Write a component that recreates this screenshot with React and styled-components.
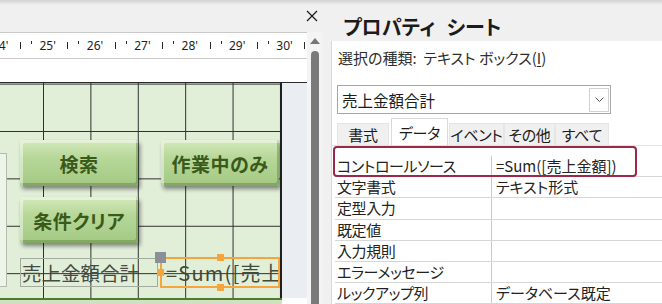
import React from "react";
import styled, { createGlobalStyle } from "styled-components";

const GlobalStyle = createGlobalStyle`
  html, body { margin: 0; padding: 0; background: #f0f0f0; }
  body { font-family: "Noto Sans CJK JP", "Noto Sans", sans-serif; }
`;

const Page = styled.div`
  position: relative;
  display: flex;
  width: 662px;
  height: 304px;
  overflow: hidden;
  background: #f0f0f0;

  &::before {
    content: "";
    position: absolute;
    left: 0;
    right: 0;
    top: 0;
    height: 5px;
    background: linear-gradient(#d2d2d2, rgba(240, 240, 240, 0));
    z-index: 5;
  }
`;

/* ---------- left: form designer ---------- */

const LeftPane = styled.div`
  width: 323px;
  display: flex;
  flex-direction: column;
`;

const TopBar = styled.div`
  height: 32px;
  display: flex;
  justify-content: flex-end;
  align-items: center;
  padding-right: 5px;
`;

const Body = styled.div`
  flex: 1;
  display: flex;
  min-height: 0;
`;

const Designer = styled.div`
  width: 307px;
  display: flex;
  flex-direction: column;
  background: #ffffff;
`;

const Ruler = styled.div`
  height: 25px;
  border-top: 1px solid #cacaca;
  border-bottom: 1px solid #cacaca;
  display: flex;
  align-items: center;
  overflow: hidden;
`;

const RulerTrack = styled.div`
  display: flex;
  margin-left: -8px;
`;

const RulerSeg = styled.div`
  flex: 0 0 47.4px;
  display: flex;
  align-items: flex-start;
  height: 12px;
`;

const RulerNum = styled.span`
  flex: 0 0 28px;
  font-family: "Noto Sans", sans-serif;
  font-size: 12px;
  line-height: 12px;
  color: #1e1e1e;
`;

const LongTick = styled.span`
  width: 1px;
  height: 7px;
  margin-top: 2px;
  background: #2a2a2a;
`;

const ShortTick = styled.span`
  width: 1px;
  height: 3px;
  margin-top: 1px;
  margin-left: 10px;
  background: #2a2a2a;
`;

const RulerGap = styled.div`
  height: 23px;
  background: #ffffff;
`;

const CanvasRow = styled.div`
  flex: 1;
  display: flex;
  border-top: 1px solid #2b2b2b;
`;

const Canvas = styled.div`
  position: relative;
  width: 280px;
  border-right: 2px solid #1f1f1f;
  overflow: hidden;
  background-color: #e1eed8;
  background-image:
    linear-gradient(to right, #2e2e2e 1px, transparent 1px),
    linear-gradient(to bottom, #2e2e2e 1px, transparent 1px);
  background-size: 47.4px 47.4px;
  background-position: -4.4px 0.6px;
`;

const CanvasMargin = styled.div`
  flex: 1;
  background: #eaeef2;
`;

const CanvasFooter = styled.div`
  height: 4px;
  border-top: 2px solid #4d7c2e;
  background: #cfe1c1;
  width: 282px;
`;

const Stub = styled.div`
  position: absolute;
  left: -1px;
  top: 70px;
  width: 6px;
  height: 132px;
  border: 1px solid #b3bcaf;
  background: #edf5e8;
`;

const FormButton = styled.div`
  position: absolute;
  left: ${(p) => p.$x}px;
  top: ${(p) => p.$y}px;
  width: 118px;
  height: 46px;
  box-sizing: border-box;
  display: flex;
  align-items: center;
  justify-content: center;
  border-radius: 2px;
  background: linear-gradient(#d3e9ba 0%, #b6d798 40%, #a3c983 100%);
  box-shadow:
    inset 3px 3px 0 rgba(255, 255, 255, 0.45),
    inset -2px -3px 0 rgba(70, 105, 40, 0.35),
    2px 3px 4px rgba(0, 0, 0, 0.45);
  color: #3a5a1b;
  font-size: 19px;
  font-weight: 700;
  font-feature-settings: "palt";
  letter-spacing: 0.5px;
`;

const FieldLabel = styled.div`
  position: absolute;
  left: 20px;
  top: 175px;
  width: 138px;
  height: 29px;
  box-sizing: border-box;
  border: 1px solid #a3ab9f;
  padding-left: 1px;
  display: flex;
  align-items: center;
  font-size: 19.5px;
  color: #454b42;
  white-space: nowrap;
`;

const FieldBox = styled.div`
  position: absolute;
  left: 160px;
  top: 174px;
  width: 120px;
  height: 31px;
  box-sizing: border-box;
  border: 2px solid #f6a43c;
  padding-left: 4px;
  display: flex;
  align-items: center;
  font-size: 20px;
  letter-spacing: 1.2px;
  color: #3f4a3a;
  white-space: nowrap;
  overflow: hidden;
`;

const Handle = styled.span`
  position: absolute;
  left: ${(p) => p.$x}px;
  top: ${(p) => p.$y}px;
  width: 7px;
  height: 7px;
  background: #f6a43c;
`;

const MoveHandle = styled.span`
  position: absolute;
  left: 155px;
  top: 169px;
  width: 11px;
  height: 11px;
  background: #8c9096;
`;

const Scrollbar = styled.div`
  width: 16px;
  display: flex;
  flex-direction: column;
  align-items: center;
  background: #f4f4f4;
  padding-top: 6px;
`;

const UpArrow = styled.span`
  width: 0;
  height: 0;
  border-left: 5px solid transparent;
  border-right: 5px solid transparent;
  border-bottom: 6px solid #767676;
`;

const Thumb = styled.span`
  flex: 1;
  width: 8px;
  margin-top: 7px;
  border-radius: 4px 4px 0 0;
  background: #7a7a7a;
`;

/* ---------- right: property sheet ---------- */

const RightPane = styled.div`
  flex: 1;
  display: flex;
  flex-direction: column;
`;

const Title = styled.div`
  height: 47px;
  display: flex;
  align-items: center;
  padding-left: 20px;
  padding-top: 12px;
  box-sizing: border-box;
  font-size: 20px;
  font-weight: 700;
  font-feature-settings: "palt";
  word-spacing: 7px;
  white-space: pre;
  color: #1b1b1b;
`;

const Sheet = styled.div`
  flex: 1;
  margin-left: 8px;
  border-left: 1px solid #d8d8d8;
  background: #ffffff;
  display: flex;
  flex-direction: column;
`;

const SelType = styled.div`
  height: 28px;
  margin-top: 2px;
  padding-left: 6px;
  display: flex;
  align-items: center;
  font-size: 15px;
  font-feature-settings: "palt";
  color: #2e2e2e;
  white-space: nowrap;

  u { text-decoration: underline; text-underline-offset: 2px; }
`;

const Combo = styled.div`
  margin: 14px 0 0 5px;
  width: 274px;
  height: 29px;
  box-sizing: border-box;
  border: 1px solid #a6a6a6;
  display: flex;
  align-items: center;
  padding-left: 4px;
  font-size: 15.5px;
  color: #1c1c1c;
`;

const ComboText = styled.span`
  flex: 1;
`;

const DropBtn = styled.span`
  width: 20px;
  height: 24px;
  margin-right: 1px;
  box-sizing: border-box;
  border: 1px solid #d0d0d0;
  display: flex;
  align-items: center;
  justify-content: center;
`;

const Tabs = styled.div`
  margin: 4px 0 0 5px;
  height: 27px;
  display: flex;
  align-items: flex-end;
`;

const Tab = styled.div`
  width: ${(p) => p.$w}px;
  height: ${(p) => (p.$active ? 27 : 22)}px;
  box-sizing: border-box;
  display: flex;
  align-items: center;
  justify-content: center;
  white-space: nowrap;
  font-size: 15px;
  letter-spacing: -0.3px;
  font-feature-settings: "palt";
  color: #1c1c1c;
  background: ${(p) => (p.$active ? "#ffffff" : "#f0f0f0")};
  border: 1px solid ${(p) => (p.$active ? "#d9d9d9" : "#e6e6e6")};
  border-bottom: none;
  margin-left: ${(p) => (p.$active ? 2 : 0)}px;
  margin-right: ${(p) => (p.$active ? 1 : 0)}px;
`;

const Grid = styled.div`
  position: relative;
  flex: 1;
  border-top: 1px solid #e2e2e2;
  padding-top: 10px;
  padding-left: 3px;
`;

const Row = styled.div`
  display: grid;
  grid-template-columns: 156px 1fr;
  height: 21.2px;
  box-sizing: border-box;
  border-bottom: 1px solid #d6d6d6;
  font-size: 15px;
  font-feature-settings: "palt";
  color: #222222;
  line-height: 20px;
`;

const Cell = styled.span`
  padding-left: ${(p) => (p.$value ? 4 : 2)}px;
  border-left: ${(p) => (p.$value ? "1px solid #c9c9c9" : "none")};
  letter-spacing: ${(p) => (p.$value ? "0" : "-0.4px")};
  white-space: nowrap;
  overflow: hidden;
`;

const Highlight = styled.div`
  position: absolute;
  left: 1px;
  top: 0;
  width: 304px;
  height: 31px;
  box-sizing: border-box;
  border: 2.5px solid #9b2849;
  border-radius: 4px;
  pointer-events: none;
`;

const rulerNums = [24, 25, 26, 27, 28, 29, 30, 31];

const props = [
  ["コントロールソース", "=Sum([売上金額])"],
  ["文字書式", "テキスト形式"],
  ["定型入力", ""],
  ["既定値", ""],
  ["入力規則", ""],
  ["エラーメッセージ", ""],
  ["ルックアップ列", "データベース既定"],
];

const tabs = [
  { label: "書式", w: 52 },
  { label: "データ", w: 57, active: true },
  { label: "イベント", w: 55 },
  { label: "その他", w: 51 },
  { label: "すべて", w: 54 },
];

export default function App() {
  return (
    <Page>
      <GlobalStyle />
      <LeftPane>
        <TopBar>
          <svg width="12" height="12" viewBox="0 0 12 12">
            <path d="M1 1L11 11M11 1L1 11" stroke="#1f1f1f" strokeWidth="1.3" fill="none" />
          </svg>
        </TopBar>
        <Body>
          <Designer>
            <Ruler>
              <RulerTrack>
                {rulerNums.map((n) => (
                  <RulerSeg key={n}>
                    <RulerNum>{n}'</RulerNum>
                    <LongTick />
                    <ShortTick />
                  </RulerSeg>
                ))}
              </RulerTrack>
            </Ruler>
            <RulerGap />
            <CanvasRow>
              <Canvas>
                <Stub />
                <FormButton $x={20} $y={57}>検索</FormButton>
                <FormButton $x={161} $y={57}>作業中のみ</FormButton>
                <FormButton $x={20} $y={114}>条件クリア</FormButton>
                <FieldLabel>売上金額合計</FieldLabel>
                <FieldBox>=Sum([売上金額])</FieldBox>
                <MoveHandle />
                <Handle $x={217} $y={171} />
                <Handle $x={217} $y={201} />
                <Handle $x={157} $y={186} />
              </Canvas>
              <CanvasMargin />
            </CanvasRow>
            <CanvasFooter />
          </Designer>
          <Scrollbar>
            <UpArrow />
            <Thumb />
          </Scrollbar>
        </Body>
      </LeftPane>

      <RightPane>
        <Title>プロパティ シート</Title>
        <Sheet>
          <SelType>
            選択の種類:&nbsp; テキスト ボックス(<u>I</u>)
          </SelType>
          <Combo>
            <ComboText>売上金額合計</ComboText>
            <DropBtn>
              <svg width="9" height="5" viewBox="0 0 9 5">
                <path d="M0.5 0.5L4.5 4.5L8.5 0.5" stroke="#555" strokeWidth="1" fill="none" />
              </svg>
            </DropBtn>
          </Combo>
          <Tabs>
            {tabs.map((t) => (
              <Tab key={t.label} $w={t.w} $active={t.active}>
                {t.label}
              </Tab>
            ))}
          </Tabs>
          <Grid>
            {props.map(([k, v]) => (
              <Row key={k}>
                <Cell>{k}</Cell>
                <Cell $value>{v}</Cell>
              </Row>
            ))}
            <Highlight />
          </Grid>
        </Sheet>
      </RightPane>
    </Page>
  );
}
